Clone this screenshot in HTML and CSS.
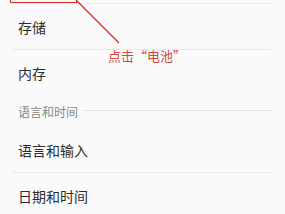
FILE: index.html
```html
<!DOCTYPE html>
<html lang="zh-CN">
<head>
<meta charset="utf-8">
<link rel="stylesheet" href="styles.css">
</head>
<body>
<div class="screen">
  <div class="list">
    <div class="row-partial"></div>
    <div class="row with-sep"><span class="label">存储</span></div>
    <div class="row"><span class="label">内存</span></div>
    <div class="section"><span class="section-title">语言和时间</span><span class="section-line"></span></div>
    <div class="row with-sep"><span class="label">语言和输入</span></div>
    <div class="row"><span class="label">日期和时间</span></div>
  </div>
  <div class="highlight-box"></div>
  <svg class="pointer" width="130" height="50" viewBox="0 0 130 50">
    <line x1="76" y1="0" x2="119" y2="43" stroke="#c8312b" stroke-width="1.3"/>
  </svg>
  <div class="callout">点击“电池”</div>
</div>
</body>
</html>
```

FILE: styles.css
```css
* { box-sizing: border-box; margin: 0; padding: 0; }
html, body { width: 285px; height: 214px; overflow: hidden; }
body {
  background: #fafafa;
  font-family: "Noto Sans CJK SC", "Noto Sans", sans-serif;
  color: #2b2b2b;
}
.screen { position: relative; width: 285px; height: 214px; }
.list { display: flex; flex-direction: column; }
.row-partial {
  height: 4px;
  margin: 0 14px 0 12px;
  border-bottom: 1px solid #e8e8e8;
}
.row {
  height: 46px;
  display: flex;
  align-items: center;
  padding-left: 18px;
  flex-shrink: 0;
}
.row.with-sep {
  margin: 0 14px 0 12px;
  padding-left: 6px;
  border-bottom: 1px solid #e8e8e8;
}
.label { font-size: 14px; line-height: 1; color: #2b2b2b; }
.section {
  height: 31px;
  display: flex;
  align-items: center;
  gap: 5px;
  padding: 0 14px 0 18px;
  flex-shrink: 0;
}
.section-title { font-size: 12px; line-height: 1; color: #888; }
.section-line { flex: 1; height: 1px; background: #dedede; margin-top: -2px; }
.highlight-box {
  position: absolute;
  left: 10px;
  top: -20px;
  width: 67px;
  height: 23px;
  border: 1.5px solid #c8312b;
}
.pointer { position: absolute; left: 0; top: 0; }
.callout {
  position: absolute;
  left: 108px;
  top: 49px;
  font-size: 13px;
  line-height: 14px;
  color: #d2473f;
  white-space: nowrap;
}
```
